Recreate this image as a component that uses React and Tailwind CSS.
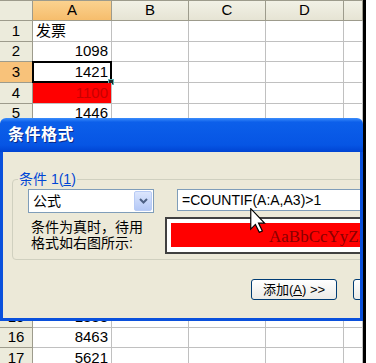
import React from 'react';

const ui = { fontFamily: '"Liberation Sans", Arial, sans-serif' };
const cjk = { fontFamily: '"Liberation Sans", "Noto Sans CJK SC", sans-serif' };

const cols = ['A', 'B', 'C', 'D', ''];
const heights = ['h-[21px]', 'h-[20px]', 'h-[21px]', 'h-[21px]', 'h-[20px]', 'h-[21px]', 'h-[20px]', 'h-[21px]', 'h-[20px]', 'h-[20px]', 'h-[21px]', 'h-[20px]', 'h-[20px]', 'h-[21px]', 'h-[20px]', 'h-[20px]', 'h-[21px]'];
const values = ['发票', '1098', '1421', '1100', '1446', '2357', '1902', '3104', '1421', '7720', '1650', '4418', '1291', '3360', '1833', '8463', '5621'];

function Sheet() {
  return (
    <div className="grid grid-cols-[33px_79px_77px_77px_78px_19px] text-[15px] text-black" style={ui}>
      <div className="h-[21px] border-t border-r border-b border-[#9d9b8c] bg-[#ecebdc]" />
      {cols.map((c, i) => (
        <div
          key={c + i}
          className={
            'h-[21px] flex items-center justify-center border-t border-r border-b border-[#9d9b8c] ' +
            (i === 0 ? 'bg-linear-to-b from-[#fbd28f] to-[#f6bd6c]' : 'bg-linear-to-b from-[#f2f1e6] to-[#e6e4d4]')
          }
        >
          {c}
        </div>
      ))}
      {values.map((v, r) => (
        <Row key={r} n={r + 1} value={v} h={heights[r]} />
      ))}
    </div>
  );
}

function Row({ n, value, h }) {
  const selected = n === 3;
  const red = n === 4;
  return (
    <>
      <div
        className={
          h + ' flex items-center justify-center border-r border-b border-[#9d9b8c] ' +
          (selected ? 'bg-[#f8c27a]' : 'bg-[#ecebdc]')
        }
      >
        {n}
      </div>
      <div
        className={
          h + ' relative flex items-center px-[3px] border-r border-b border-[#c0c0c0] ' +
          (n === 1 ? 'justify-start ' : 'justify-end ') +
          (red ? 'bg-[#ff0000] text-[#c80000]' : 'bg-white')
        }
        style={n === 1 ? cjk : ui}
      >
        {value}
        {selected && (
          <>
            <div className="absolute -left-px -top-px -right-px -bottom-px border-2 border-black" />
            <div className="absolute -right-[3px] -bottom-[3px] w-[6px] h-[6px] bg-[#1a2b2b] border border-[#5fb3b3]" />
          </>
        )}
      </div>
      {[0, 1, 2, 3].map(i => (
        <div key={i} className={h + ' bg-white border-r border-b border-[#c0c0c0]'} />
      ))}
    </>
  );
}

function Cursor() {
  return (
    <svg className="absolute left-[250px] top-[90px]" width="16" height="25" viewBox="0 0 12 19">
      <polygon points="0.5,0.5 0.5,16 4,12.5 7,18.5 9.3,17.5 6.4,11.5 11,11.5" fill="white" stroke="black" strokeWidth="0.9" strokeLinejoin="miter" />
    </svg>
  );
}

function Dialog() {
  return (
    <div className="absolute left-0 top-[118px] w-[363px] h-[203px] flex flex-col overflow-hidden">
      <div className="h-[34px] shrink-0 flex items-center pl-[8px] rounded-t-[6px] bg-[linear-gradient(180deg,#3b8dfc_0%,#0c5fea_12%,#0655e4_80%,#0044d2_100%)]">
        <span className="text-white font-bold text-[16px] tracking-[0.5px] [text-shadow:1px_1px_0_#0a2a8a]" style={cjk}>
          条件格式
        </span>
      </div>
      <div className="relative flex-1 bg-[#ece9d8] border-x-[3px] border-b-[3px] border-[#0a50dc] overflow-hidden">
        <div className="relative ml-[9px] mt-[27px] w-[400px] h-[81px] border border-[#d0d0bf] rounded-[4px]">
          <div className="absolute left-[5px] -top-[10px] px-[1px] bg-[#ece9d8] text-[#0046d5] text-[14px] leading-[18px]" style={cjk}>
            条件 1(<span className="underline">1</span>)
          </div>
          <div className="pl-[15px] pt-[9px] flex flex-col">
            <div className="flex gap-[23px] items-start">
              <div className="w-[126px] h-[24px] bg-white border border-[#7f9db9] flex items-center justify-between pl-[4px] pr-[1px]">
                <span className="text-[14px]" style={cjk}>公式</span>
                <div className="w-[18px] h-[20px] rounded-[2px] bg-linear-to-b from-[#dce6fd] to-[#b4c8f6] border border-[#b8cbf5] flex items-center justify-center">
                  <svg width="9" height="6" viewBox="0 0 9 6">
                    <path d="M1 1 L4.5 4.5 L8 1" fill="none" stroke="#4d6185" strokeWidth="2" />
                  </svg>
                </div>
              </div>
              <div className="w-[220px] h-[22px] bg-white border border-[#7f9db9] flex items-center pl-[4px] text-[14px] text-black" style={ui}>
                =COUNTIF(A:A,A3)&gt;1
              </div>
            </div>
            <div className="flex mt-[4px]">
              <div className="w-[137px] pl-[3px] pt-[2px] text-[14px] leading-[16px] text-black" style={cjk}>
                条件为真时，待用
                <br />
                格式如右图所示:
              </div>
              <div className="w-[220px] h-[37px] border-t-2 border-l-2 border-b-2 border-[#404040] bg-white pl-[4px] pt-[4px] pb-[5px]">
                <div className="h-full bg-[#ff0000] flex items-end pl-[98px] pb-[1px]">
                  <span className="text-[17px] leading-[18px] text-[#8a0000]" style={{ fontFamily: '"Liberation Serif", serif' }}>
                    AaBbCcYyZz
                  </span>
                </div>
              </div>
            </div>
          </div>
        </div>
        <div className="flex gap-[16px] pl-[248px] mt-[19px]">
          <Button>
            添加(<span className="underline">A</span>) &gt;&gt;
          </Button>
          <Button>删除(D)...</Button>
        </div>
      </div>
      <Cursor />
    </div>
  );
}

function Button({ children }) {
  return (
    <div
      className="shrink-0 w-[86px] h-[21px] rounded-[3px] border border-[#003c74] bg-linear-to-b from-[#ffffff] to-[#ecebe6] flex items-center justify-center text-[13px] text-black whitespace-nowrap"
      style={cjk}
    >
      {children}
    </div>
  );
}

export default function App() {
  return (
    <div className="w-[376px] h-[363px] overflow-hidden flex bg-white">
      <div className="relative w-[363px] h-[363px] overflow-hidden">
        <Sheet />
        <Dialog />
      </div>
      <div className="w-[3px] h-full bg-black" />
      <div className="flex-1 bg-white" />
    </div>
  );
}
